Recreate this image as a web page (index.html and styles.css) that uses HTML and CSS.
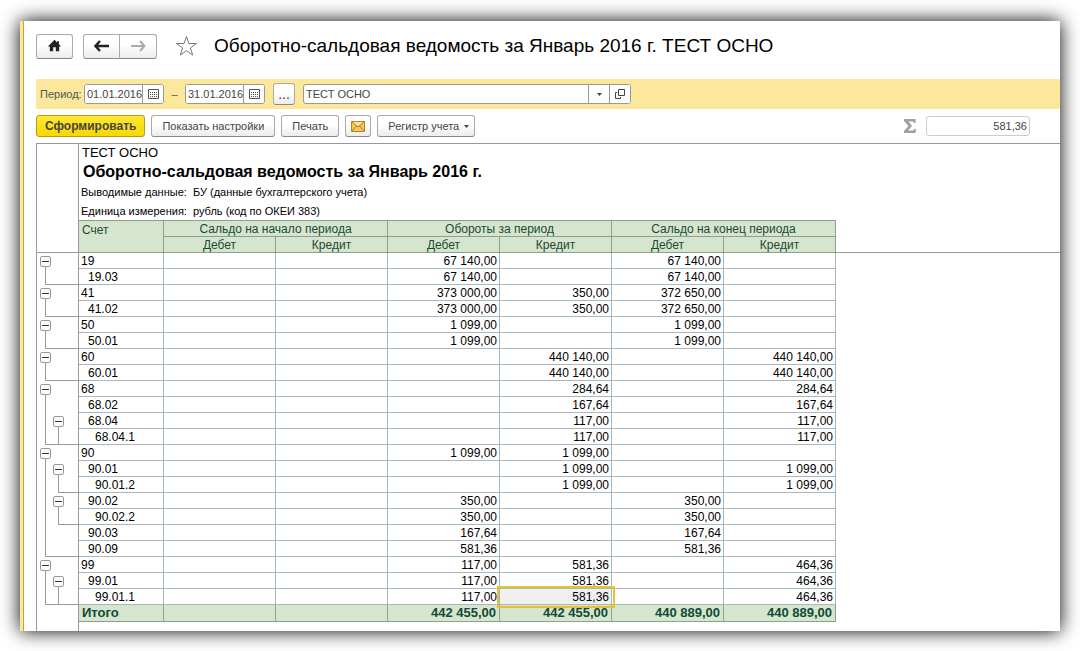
FILE: index.html
```html
<!DOCTYPE html>
<html lang="ru">
<head>
    <meta charset="UTF-8">
    <meta name="viewport" content="width=device-width, initial-scale=1.0">
    <title>Оборотно-сальдовая ведомость</title>
    <link rel="stylesheet" href="styles.css">
</head>
<body>

    <main class="window">
        <header class="header">
            <button type="button" class="btn nav-btn" aria-label="Домой">
                <svg width="17" height="14" viewBox="0 0 17 14"><path d="M8.500 0 1 7.500h2.200V13h3.800V8.500h3V13h3.800V7.500H16L13.500 5V1.500h-2V3z" fill="#222"/></svg>
            </button>
            <div class="history">
                <button type="button" class="btn nav-btn" aria-label="Назад">
                    <svg width="15" height="12" viewBox="0 0 15 12"><path d="M6 1 1.500 6 6 11M2 6h13" fill="none" stroke="#222" stroke-width="2.400"/></svg>
                </button>
                <button type="button" class="btn nav-btn" aria-label="Вперед">
                    <svg width="15" height="12" viewBox="0 0 15 12"><path d="M9 1l4.500 5L9 11M13 6H0" fill="none" stroke="#aaa" stroke-width="2"/></svg>
                </button>
            </div>
            <button type="button" class="star" aria-label="В избранное">
                <svg width="23" height="22" viewBox="0 0 23 22"><path d="M11.500 1.500l2.400 7h7.600l-6.100 4.400 2.300 7.200-6.200-4.400-6.200 4.400 2.300-7.200L1.500 8.500h7.600z" fill="#fff" stroke="#777"/></svg>
            </button>
            <h1>Оборотно-сальдовая ведомость за Январь 2016 г. ТЕСТ ОСНО</h1>
        </header>

        <div class="filter">
            <label for="dateFrom">Период:</label>
            <div class="field date">
                <input type="text" id="dateFrom" value="01.01.2016">
                <button type="button" aria-label="Выбрать начало периода">
                    <svg width="11" height="10" viewBox="0 0 11 10"><path d="M.5.500h10v9H.5z" fill="none" stroke="#555"/><path d="M2 3.500h7M2 5.500h7M2 7.500h7" stroke="#555" stroke-dasharray="1 1"/></svg>
                </button>
            </div>
            <label for="dateTo" class="dash">–</label>
            <div class="field date">
                <input type="text" id="dateTo" value="31.01.2016">
                <button type="button" aria-label="Выбрать конец периода">
                    <svg width="11" height="10" viewBox="0 0 11 10"><path d="M.5.500h10v9H.5z" fill="none" stroke="#555"/><path d="M2 3.500h7M2 5.500h7M2 7.500h7" stroke="#555" stroke-dasharray="1 1"/></svg>
                </button>
            </div>
            <button type="button" class="btn more">...</button>
            <div class="field org">
                <select id="org" aria-label="Организация">
                    <option>ТЕСТ ОСНО</option>
                </select>
                <button type="button" aria-label="Открыть">
                    <svg width="10" height="10" viewBox="0 0 10 10"><path d="M3.500.500h6v6h-6zM2 3.500H.5v6h5V8" fill="none" stroke="#444"/></svg>
                </button>
            </div>
        </div>

        <div class="toolbar">
            <button type="button" class="btn primary">Сформировать</button>
            <button type="button" class="btn">Показать настройки</button>
            <button type="button" class="btn">Печать</button>
            <button type="button" class="btn mail" aria-label="Отправить">
                <svg width="14" height="11" viewBox="0 0 14 11"><path d="M.5.500h13v10H.5z" fill="#f6c65c" stroke="#b97f22"/><path d="M1 1l6 5 6-5M1 10l4.500-5M13 10L8.500 5" fill="none" stroke="#b97f22"/><path d="M2 1h10L7 5z" fill="#fde8a8"/></svg>
            </button>
            <button type="button" class="btn menu">Регистр учета
                <svg width="5" height="3" viewBox="0 0 5 3"><path d="M0 0h5L2.500 3z" fill="#444"/></svg>
            </button>
            <label for="sum" class="sigma" aria-label="Сумма">
                <svg width="12" height="14" viewBox="0 0 12 14"><path d="M0 0h11.500v4H10L9 2.500H4.500L8 7l-4 4.500h5L10.500 10H12l-.5 4H0v-2l4.500-5L0 2z" fill="#a0a0a0"/></svg>
            </label>
            <input type="text" id="sum" class="sum" value="581,36" readonly>
        </div>

        <table class="sheet">
            <colgroup>
                <col class="col-tree">
                <col class="col-account">
                <col class="col-num" span="6">
                <col>
            </colgroup>
            <thead>
                <tr>
                    <td class="gutter" rowspan="6"></td>
                    <td class="company" colspan="8">ТЕСТ ОСНО</td>
                </tr>
                <tr><td class="doc-title" colspan="8">Оборотно-сальдовая ведомость за Январь 2016 г.</td></tr>
                <tr><td class="info" colspan="8"><span>Выводимые данные:</span>БУ (данные бухгалтерского учета)</td></tr>
                <tr><td class="info" colspan="8"><span>Единица измерения:</span>рубль (код по ОКЕИ 383)</td></tr>
                <tr class="head head-top">
                    <th class="account" rowspan="2">Счет</th>
                    <th colspan="2">Сальдо на начало периода</th>
                    <th colspan="2">Обороты за период</th>
                    <th colspan="2">Сальдо на конец периода</th>
                    <td class="rest" rowspan="2"></td>
                </tr>
                <tr class="head">
                    <th>Дебет</th>
                    <th>Кредит</th>
                    <th>Дебет</th>
                    <th>Кредит</th>
                    <th>Дебет</th>
                    <th>Кредит</th>
                </tr>
            </thead>
            <tbody id="rows"></tbody>
            <tfoot>
                <tr class="total">
                    <td class="gutter"></td>
                    <th>Итого</th>
                    <td></td>
                    <td></td>
                    <td>442 455,00</td>
                    <td>442 455,00</td>
                    <td>440 889,00</td>
                    <td>440 889,00</td>
                </tr>
                <tr class="tail">
                    <td class="gutter"></td>
                    <td colspan="8"></td>
                </tr>
            </tfoot>
        </table>
    </main>

    <script>
        // счет, классы дерева, сальдо нач. (Дт, Кт), обороты (Дт, Кт), сальдо кон. (Дт, Кт)
        const data = [
            ['19', 'trunk open-1', '', '', '67 140,00', '', '67 140,00', ''],
            ['19.03', 'trunk end-1', '', '', '67 140,00', '', '67 140,00', ''],
            ['41', 'trunk open-1', '', '', '373 000,00', '350,00', '372 650,00', ''],
            ['41.02', 'trunk end-1', '', '', '373 000,00', '350,00', '372 650,00', ''],
            ['50', 'trunk open-1', '', '', '1 099,00', '', '1 099,00', ''],
            ['50.01', 'trunk end-1', '', '', '1 099,00', '', '1 099,00', ''],
            ['60', 'trunk open-1', '', '', '', '440 140,00', '', '440 140,00'],
            ['60.01', 'trunk end-1', '', '', '', '440 140,00', '', '440 140,00'],
            ['68', 'trunk open-1', '', '', '', '284,64', '', '284,64'],
            ['68.02', 'trunk', '', '', '', '167,64', '', '167,64'],
            ['68.04', 'trunk branch open-2', '', '', '', '117,00', '', '117,00'],
            ['68.04.1', 'trunk branch end-1', '', '', '', '117,00', '', '117,00'],
            ['90', 'trunk open-1', '', '', '1 099,00', '1 099,00', '', ''],
            ['90.01', 'trunk branch open-2', '', '', '', '1 099,00', '', '1 099,00'],
            ['90.01.2', 'trunk branch end-2', '', '', '', '1 099,00', '', '1 099,00'],
            ['90.02', 'trunk branch open-2', '', '', '350,00', '', '350,00', ''],
            ['90.02.2', 'trunk branch end-2', '', '', '350,00', '', '350,00', ''],
            ['90.03', 'trunk', '', '', '167,64', '', '167,64', ''],
            ['90.09', 'trunk end-1', '', '', '581,36', '', '581,36', ''],
            ['99', 'trunk open-1', '', '', '117,00', '581,36', '', '464,36'],
            ['99.01', 'trunk branch open-2', '', '', '117,00', '581,36', '', '464,36'],
            ['99.01.1', 'trunk branch end-1', '', '', '117,00', '581,36', '', '464,36']
        ];

        const rows = document.querySelector('#rows');

        data.forEach(([account, tree, ...values]) => {
            const tr = document.createElement('tr');
            const level = account.split('.').length;
            const toggle = tree.includes('open') ? `<button type="button" class="toggle" aria-label="Свернуть ${account}"></button>` : '';
            tr.innerHTML = `<td class="tree ${tree}">${toggle}</td><th class="level-${level}">${account}</th>`
                + values.map(value => `<td class="num">${value}</td>`).join('');
            rows.append(tr);
        });

        // текущая ячейка
        rows.lastElementChild.cells[5].classList.add('selected');
    </script>
</body>
</html>
```
FILE: styles.css
```css
* {
    box-sizing: border-box;
    margin: 0;
    padding: 0;
}

body {
    padding: 21px 20px;
    background-color: #fff;
    color: #000;
    font-family: "Liberation Sans", Arial, sans-serif;
    font-size: 12px;
}

svg {
    display: block;
}

button, input, select {
    font-family: inherit;
    font-size: 11px;
    color: #444;
}

.window {
    padding-left: 13px;
    border-left: 3px solid #fbe89b;
    background-color: #fff;
    box-shadow: inset 1px 0 0 #c3a43c, 0 0 18px #000;
}

/* header */

.header {
    display: flex;
    align-items: center;
    height: 58px;
    padding-bottom: 8px;
}

.header h1 {
    margin-left: 16px;
    font-size: 19px;
    font-weight: normal;
    white-space: nowrap;
}

.btn {
    display: flex;
    align-items: center;
    justify-content: center;
    height: 22px;
    padding: 0 10px;
    border: 1px solid #aaa;
    border-bottom-color: #888;
    border-radius: 3px;
    background: linear-gradient(#fff 40%, #ececec);
    white-space: nowrap;
}

.nav-btn {
    width: 37px;
    height: 25px;
}

.history {
    display: flex;
    margin-left: 10px;
}

.history .btn:first-child {
    border-radius: 3px 0 0 3px;
}

.history .btn:last-child {
    border-left: 0;
    border-radius: 0 3px 3px 0;
}

.star {
    margin-left: 18px;
    border: 0;
    background: none;
}

/* period */

.filter {
    display: flex;
    align-items: center;
    height: 30px;
    padding-left: 4px;
    background-color: #fbe89b;
    color: #555;
    font-size: 11px;
}

.filter label {
    width: 44px;
}

.filter .dash {
    width: 21px;
    text-align: center;
}

.field {
    display: flex;
    height: 20px;
    border: 1px solid #999;
    border-radius: 3px;
    background-color: #fff;
    overflow: hidden;
}

.field input, .field select {
    flex: 1;
    min-width: 0;
    padding-left: 2px;
    border: 0;
    background-color: #fff;
}

.field button {
    display: flex;
    align-items: center;
    justify-content: center;
    width: 21px;
    border: 0;
    border-left: 1px solid #999;
    background-color: #fff;
}

.date {
    width: 80px;
}

.more {
    width: 22px;
    margin: 0 8px;
    padding: 0;
    font-size: 14px;
}

.org {
    width: 328px;
}

.org select {
    appearance: none;
    background: url("data:image/svg+xml,%3Csvg xmlns='http://www.w3.org/2000/svg' width='21' height='18'%3E%3Cpath d='M.5 0v18' stroke='%23999'/%3E%3Cpath d='M9 8h5l-2.500 3z' fill='%23444'/%3E%3C/svg%3E") right center no-repeat;
}

/* commands */

.toolbar {
    display: flex;
    align-items: center;
    gap: 6px;
    height: 34px;
    padding-right: 30px;
}

.primary {
    padding: 0 8px;
    border-color: #b59b1c;
    background: linear-gradient(#ffe733, #f8d800);
    font-size: 12px;
    font-weight: bold;
}

.mail {
    width: 26px;
    padding: 0;
}

.menu {
    gap: 5px;
    padding: 0 5px 0 10px;
}

.sigma {
    margin-left: auto;
}

.sum {
    width: 104px;
    height: 20px;
    margin-left: 4px;
    padding-right: 2px;
    border: 1px solid #ccc;
    border-radius: 3px;
    text-align: right;
}

/* report */

.sheet {
    width: 100%;
    table-layout: fixed;
    border-spacing: 0;
    border-top: 1px solid #999;
    line-height: 14px;
}

.col-tree {
    width: 43px;
}

.col-account {
    width: 85px;
}

.col-num {
    width: 112px;
}

.sheet th {
    padding-top: 1px;
    text-align: left;
    font-weight: normal;
}

.gutter, .tree {
    border-left: 1px solid #999;
    border-right: 1px solid #999;
}

thead .gutter {
    border-bottom: 1px solid #999;
}

.company {
    height: 17px;
    padding-left: 3px;
    font-size: 13px;
}

.doc-title {
    height: 21px;
    padding-left: 4px;
    font-size: 16px;
    font-weight: bold;
}

.info {
    height: 19px;
    padding-left: 2px;
    font-size: 11px;
}

.info span {
    display: inline-block;
    width: 112px;
}

.head th {
    height: 16px;
    border-right: 1px solid #8f9f8f;
    border-bottom: 1px solid #8f9f8f;
    background-color: #d6e5cd;
    color: #1c4a36;
    text-align: center;
}

.head-top th {
    height: 17px;
    border-top: 1px solid #8f9f8f;
}

.head .account {
    padding: 2px 3px;
    text-align: left;
    vertical-align: top;
}

.rest {
    border-bottom: 1px solid #999;
}

/* trunk - first level line, branch - second level line */

.tree {
    height: 16px;
    padding-left: 3px;
    vertical-align: top;
    background:
        linear-gradient(#999, #999) 8px 0 / var(--trunk, 0) 100% no-repeat,
        linear-gradient(#999, #999) 21px 0 / var(--branch, 0) 100% no-repeat,
        linear-gradient(#999, #999) 100% 100% / var(--end, 0) 1px no-repeat;
}

.trunk {
    --trunk: 1px;
}

.branch {
    --branch: 1px;
}

.end-1 {
    --end: 33px;
}

.end-2 {
    --end: 20px;
}

.open-2 {
    padding-left: 16px;
}

.toggle {
    display: block;
    width: 11px;
    height: 11px;
    margin-top: 3px;
    border: 1px solid #999;
    border-radius: 2px;
    background: linear-gradient(#333, #333) center / 7px 1px no-repeat #fff;
    /* hides the line above the box */
    box-shadow: 0 -3px 0 #fff;
}

tbody th, .num {
    height: 16px;
    border-right: 1px solid #a9b9b9;
    border-bottom: 1px solid #a9b9b9;
}

.num {
    padding: 1px 2px 0 0;
    text-align: right;
}

.sheet .level-1 {
    padding-left: 2px;
}

.sheet .level-2 {
    padding-left: 9px;
}

.sheet .level-3 {
    padding-left: 16px;
}

.selected {
    background-color: #f0f0f0;
    outline: 2px solid #e8c22e;
    outline-offset: 1px;
}

.total th, .total td:not(.gutter) {
    height: 17px;
    padding: 0 3px;
    border-right: 1px solid #8f9f8f;
    border-bottom: 1px solid #8f9f8f;
    background-color: #d6e5cd;
    color: #0f4a38;
    font-size: 13px;
    font-weight: bold;
    text-align: right;
}

.total th:not(.gutter) {
    text-align: left;
}

.tail td {
    height: 9px;
}
```
